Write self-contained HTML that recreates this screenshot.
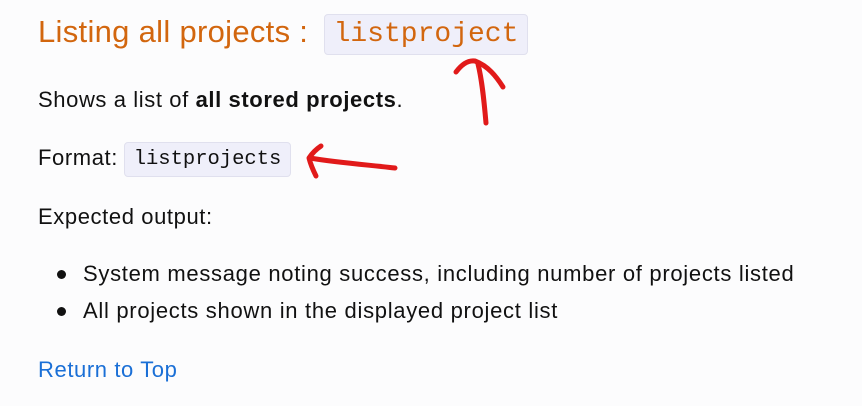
<!DOCTYPE html>
<html><head><style>
body{margin:0;width:862px;height:406px;background:#fcfcfd;font-family:"Liberation Sans",sans-serif;position:relative;overflow:hidden;color:#111}
.a{position:absolute;white-space:nowrap}
.t{font-size:22px;letter-spacing:0.6px}
.b{position:absolute;width:9px;height:9px;border-radius:50%;background:#111;left:57px}
code{font-family:"Liberation Mono",monospace;background:#efeffa;border:1px solid #e0e0ee;border-radius:4px;position:absolute}
</style></head><body>
<div class="a" style="left:38px;top:14px;font-size:31px;color:#d2660e;letter-spacing:0.3px">Listing all projects :</div>
<code style="left:324px;top:14px;width:202px;height:39px;font-size:28px;color:#d2660e;line-height:40px;text-align:center">listproject</code>
<div class="a t" style="left:38px;top:87px">Shows a list of <b>all stored projects</b>.</div>
<div class="a t" style="left:38px;top:145px">Format:</div>
<code style="left:124px;top:142px;width:165px;height:33px;font-size:20.5px;line-height:34px;text-align:center">listprojects</code>
<div class="a t" style="left:38px;top:204px">Expected output:</div>
<div class="b" style="top:270px"></div>
<div class="a t" style="left:83px;top:261px;letter-spacing:0.7px">System message noting success, including number of projects listed</div>
<div class="b" style="top:307px"></div>
<div class="a t" style="left:83px;top:298px;letter-spacing:0.7px">All projects shown in the displayed project list</div>
<div class="a t" style="left:38px;top:357px;color:#1a6fd6">Return to Top</div>
<svg class="a" style="left:0;top:0" width="862" height="406">
<g fill="none" stroke="#e11a1a" stroke-width="5" stroke-linecap="round" stroke-linejoin="round">
<path d="M486 123 C484 100 482 80 478 64"/>
<path d="M456 72 C462 64 468 60 475 61 C488 66 496 76 503 87"/>
<path d="M395 168 C370 165 340 163 310 158"/>
<path d="M321 146 C315 150 311 155 309 158 C311 166 314 172 316 176"/>
</g></svg>
</body></html>
